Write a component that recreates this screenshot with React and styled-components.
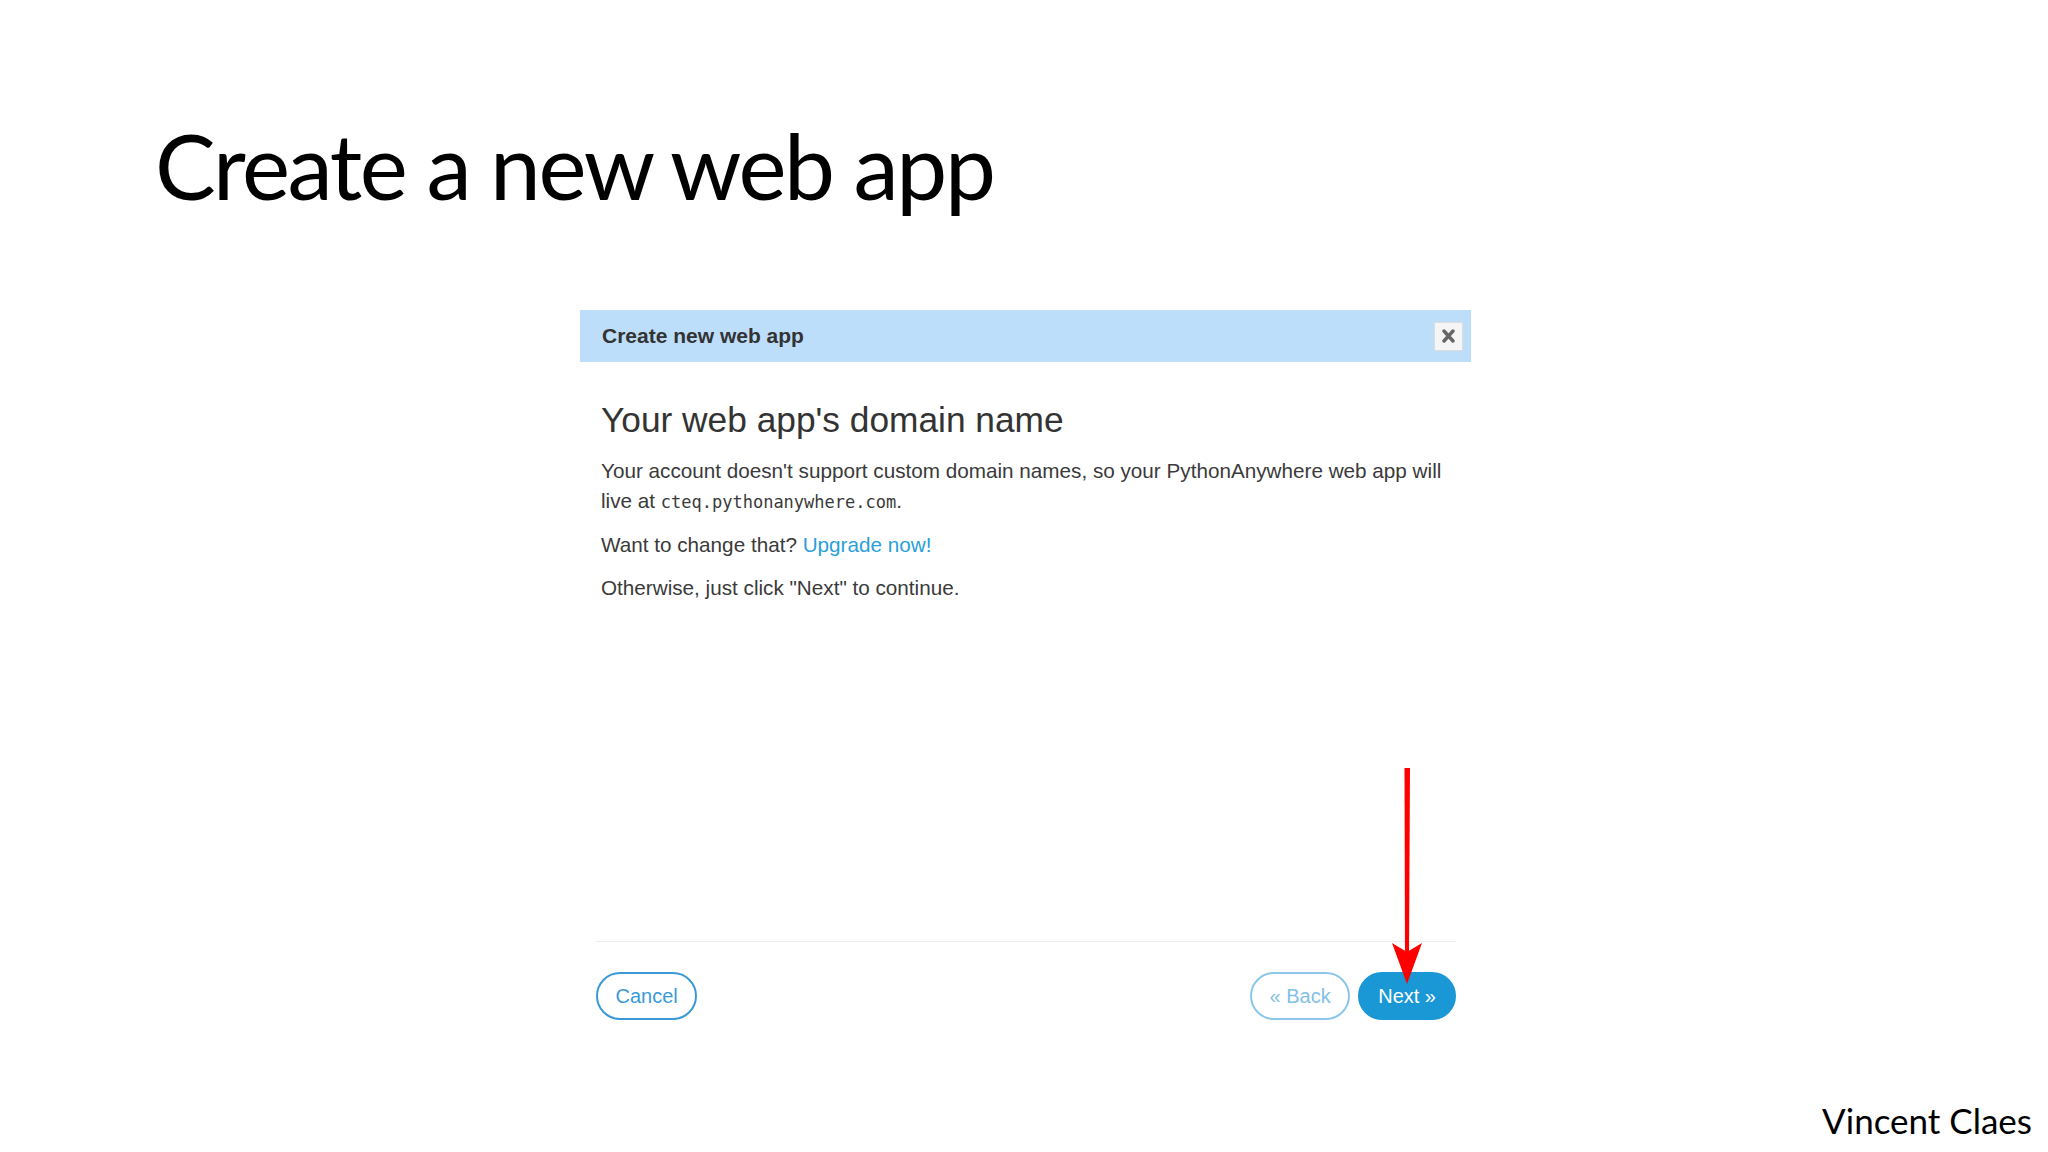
import React from "react";
import styled, { createGlobalStyle } from "styled-components";

const Global = createGlobalStyle`
  html, body { margin: 0; padding: 0; background: #ffffff; }
  * { box-sizing: border-box; }
`;

const Slide = styled.div`
  position: relative;
  width: 2048px;
  height: 1152px;
  display: flex;
  flex-direction: column;
  background: #ffffff;
  overflow: hidden;
`;

const Title = styled.h1`
  margin: 110px 0 0 155px;
  font-family: Lato, "Open Sans", sans-serif;
  font-weight: 400;
  font-size: 91px;
  line-height: 110px;
  letter-spacing: -2.4px;
  color: #000;
`;

const Dialog = styled.div`
  position: relative;
  margin: 90px 0 0 580px;
  width: 891px;
  background: #fff;
  font-family: "Liberation Sans", Arial, sans-serif;
  color: #333;
`;

const DialogHeader = styled.div`
  height: 52px;
  background: #bcdefb;
  display: flex;
  align-items: center;
  justify-content: space-between;
  padding: 0 8px 0 22px;
`;

const HeaderTitle = styled.span`
  font-weight: 700;
  font-size: 21px;
  line-height: 52px;
  color: #333;
`;

const CloseButton = styled.button`
  width: 29px;
  height: 29px;
  padding: 0;
  border: 1px solid #dcdcdc;
  background: #f5f5f5;
  display: flex;
  align-items: center;
  justify-content: center;
`;

const Body = styled.div`
  height: 579px;
  padding: 38px 15px 0 21px;
`;

const Heading = styled.h2`
  margin: 0 0 16px;
  font-weight: 400;
  font-size: 35.3px;
  line-height: 40px;
  color: #333;
`;

const Para = styled.p`
  margin: 0 0 13px;
  font-size: 20.7px;
  line-height: 30px;
  color: #3a3a3a;
`;

const Code = styled.code`
  font-family: "DejaVu Sans Mono", "Liberation Mono", monospace;
  font-size: 17px;
`;

const Link = styled.a`
  color: #2a9fd8;
  text-decoration: none;
`;

const Footer = styled.div`
  margin: 0 15px 0 16px;
  border-top: 1px solid #ececec;
  padding: 30px 0 20px;
  display: flex;
  justify-content: space-between;
  align-items: center;
`;

const ButtonGroup = styled.div`
  display: flex;
  gap: 8px;
`;

const PillButton = styled.button`
  height: 48px;
  padding: 0 ${(p) => (p.$primary ? 18 : 17.5)}px;
  border-radius: 24px;
  font-family: "Liberation Sans", Arial, sans-serif;
  font-size: 20px;
  line-height: 44px;
  border: 2px solid ${(p) => (p.$primary ? "#1a98d5" : p.$disabled ? "#8cc7ea" : "#3a9ad8")};
  background: ${(p) => (p.$primary ? "#1a98d5" : "#ffffff")};
  color: ${(p) => (p.$primary ? "#ffffff" : p.$disabled ? "#82c0e6" : "#3a9ad8")};
`;

const Arrow = styled.svg`
  position: absolute;
  left: 812px;
  top: 458px;
`;

const Author = styled.div`
  margin-top: auto;
  align-self: flex-end;
  padding: 0 16px 12px 0;
  font-family: Lato, "Open Sans", sans-serif;
  font-size: 35px;
  line-height: 40px;
  color: #000;
`;

export default function App() {
  return (
    <>
      <Global />
      <Slide>
        <Title>Create a new web app</Title>
        <Dialog>
          <DialogHeader>
            <HeaderTitle>Create new web app</HeaderTitle>
            <CloseButton aria-label="close">
              <svg width="13" height="14" viewBox="0 0 13 14">
                <path d="M2 2 L11 12 M11 2 L2 12" stroke="#666" strokeWidth="3.4" strokeLinecap="round" />
              </svg>
            </CloseButton>
          </DialogHeader>
          <Body>
            <Heading>Your web app's domain name</Heading>
            <Para>
              Your account doesn't support custom domain names, so your PythonAnywhere web app will
              <br />
              live at <Code>cteq.pythonanywhere.com</Code>.
            </Para>
            <Para>
              Want to change that? <Link href="#">Upgrade now!</Link>
            </Para>
            <Para>Otherwise, just click "Next" to continue.</Para>
          </Body>
          <Footer>
            <PillButton>Cancel</PillButton>
            <ButtonGroup>
              <PillButton $disabled>« Back</PillButton>
              <PillButton $primary>Next »</PillButton>
            </ButtonGroup>
          </Footer>
          <Arrow width="30" height="216" viewBox="0 0 30 216">
            <path d="M12.5 0 L18 0 L17 186 L13 186 Z" fill="#ff0000" />
            <path d="M0 175 L15 184 L30 175 L15 216 Z" fill="#ff0000" />
          </Arrow>
        </Dialog>
        <Author>Vincent Claes</Author>
      </Slide>
    </>
  );
}
